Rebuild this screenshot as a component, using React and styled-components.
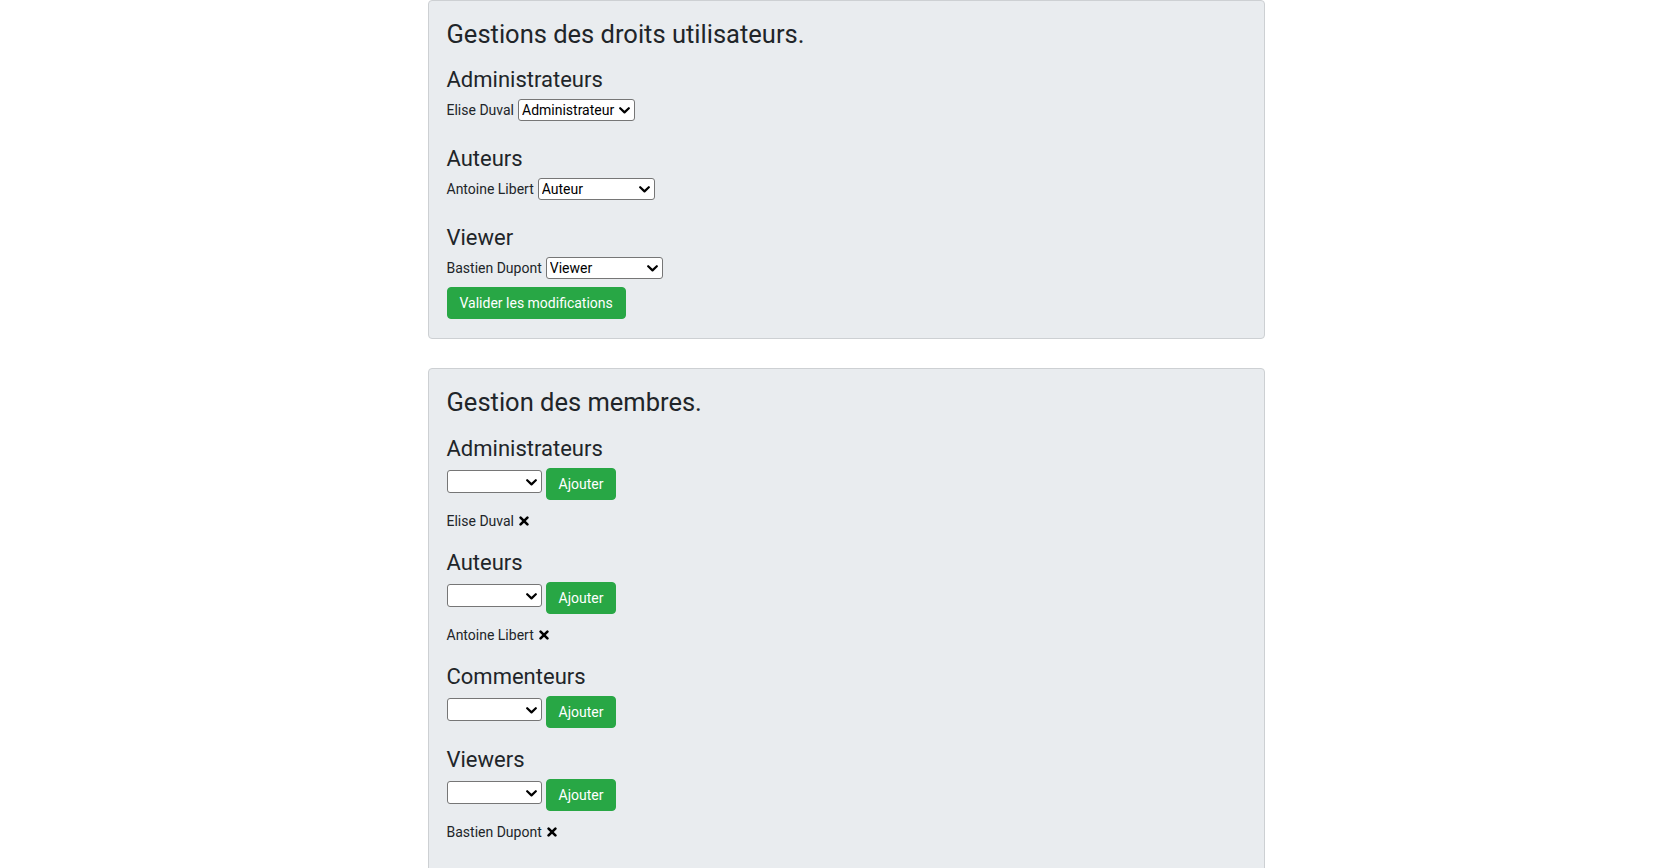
import React from "react";
import styled, { createGlobalStyle } from "styled-components";

const GlobalStyle = createGlobalStyle`
  html, body {
    margin: 0;
    padding: 0;
    background: #ffffff;
    overflow: hidden;
  }
  body {
    font-family: "Segoe UI", Roboto, "Liberation Sans", Arial, sans-serif;
    color: #212529;
    font-size: 14px;
  }
  * {
    box-sizing: border-box;
  }
`;

const Column = styled.main`
  margin-left: calc(25% + 10px);
  width: calc(50% + 2px);
  display: flex;
  flex-direction: column;
  gap: 29px;
`;

const Panel = styled.section`
  background: #e9ecef;
  border: 1px solid #cdd0d3;
  border-radius: 4px;
  padding: 16px 18px ${(p) => p.$bottom || 19}px;
`;

const Title = styled.h3`
  margin: 0 0 ${(p) => p.$after || 15}px;
  font-size: 25.5px;
  line-height: 34px;
  font-weight: 400;
`;

const Groups = styled.div`
  display: flex;
  flex-direction: column;
  gap: ${(p) => p.$gap}px;
`;

const Group = styled.div``;

const GroupTitle = styled.h4`
  margin: 0 0 ${(p) => p.$after}px;
  font-size: 22px;
  line-height: 28px;
  font-weight: 400;
`;

const Row = styled.div`
  display: flex;
  align-items: ${(p) => (p.$top ? "flex-start" : "center")};
  gap: 4px;
  min-height: 24px;
`;

const Name = styled.span`
  font-size: 14px;
  line-height: 24px;
`;

const SelectBox = styled.div`
  position: relative;
  width: ${(p) => p.$width}px;
  height: ${(p) => p.$height}px;
  margin-top: ${(p) => p.$offset || 0}px;
`;

const Select = styled.select`
  appearance: none;
  width: 100%;
  height: 100%;
  margin: 0;
  padding: 0 14px 0 3px;
  border: 1px solid #767676;
  border-radius: 3px;
  background: #ffffff;
  font-family: inherit;
  font-size: 14px;
  color: #000000;
  outline: none;
`;

const Chevron = styled.svg`
  position: absolute;
  right: 5px;
  top: 50%;
  width: 11px;
  height: 7px;
  margin-top: -3px;
  pointer-events: none;
`;

const GreenButton = styled.button`
  height: 32px;
  padding: 0 12px;
  border: 1px solid #28a745;
  border-radius: 4px;
  background: #28a745;
  color: #ffffff;
  font-family: inherit;
  font-size: 14px;
  margin-top: ${(p) => p.$offset || 0}px;
`;

const Member = styled.div`
  display: flex;
  align-items: center;
  gap: 5px;
  margin-top: 11px;
  font-size: 14px;
  line-height: 20px;
`;

const Cross = styled.svg`
  width: 10px;
  height: 10px;
`;

const Remove = () => (
  <Cross viewBox="0 0 10 10">
    <path
      d="M1.6 1.6 L8.4 8.4 M8.4 1.6 L1.6 8.4"
      stroke="#000"
      strokeWidth="2.6"
      strokeLinecap="round"
    />
  </Cross>
);

const RoleSelect = ({ value, width, height, offset, options }) => (
  <SelectBox $width={width} $height={height} $offset={offset}>
    <Select defaultValue={value}>
      {options.map((o) => (
        <option key={o} value={o}>
          {o}
        </option>
      ))}
    </Select>
    <Chevron viewBox="0 0 11 7">
      <polyline
        points="1.2,1.2 5.5,5.4 9.8,1.2"
        fill="none"
        stroke="#000"
        strokeWidth="2.2"
        strokeLinecap="round"
        strokeLinejoin="round"
      />
    </Chevron>
  </SelectBox>
);

const roles = ["Administrateur", "Auteur", "Commentateur", "Viewer"];

const rights = [
  { title: "Administrateurs", name: "Elise Duval", role: "Administrateur" },
  { title: "Auteurs", name: "Antoine Libert", role: "Auteur" },
  { title: "Viewer", name: "Bastien Dupont", role: "Viewer" },
];

const members = [
  { title: "Administrateurs", list: ["Elise Duval"] },
  { title: "Auteurs", list: ["Antoine Libert"] },
  { title: "Commenteurs", list: [] },
  { title: "Viewers", list: ["Bastien Dupont"] },
];

export default function App() {
  return (
    <>
      <GlobalStyle />
      <Column>
        <Panel>
          <Title>Gestions des droits utilisateurs.</Title>
          <Groups $gap={23}>
            {rights.map((r) => (
              <Group key={r.title}>
                <GroupTitle $after={4}>{r.title}</GroupTitle>
                <Row>
                  <Name>{r.name}</Name>
                  <RoleSelect value={r.role} width={117} height={22} options={roles} />
                </Row>
              </Group>
            ))}
          </Groups>
          <GreenButton $offset={7}>Valider les modifications</GreenButton>
        </Panel>

        <Panel $bottom={40}>
          <Title $after={16}>Gestion des membres.</Title>
          <Groups $gap={18}>
            {members.map((m) => (
              <Group key={m.title}>
                <GroupTitle $after={5}>{m.title}</GroupTitle>
                <Row $top>
                  <RoleSelect value="" width={95} height={23} offset={2} options={[""]} />
                  <GreenButton>Ajouter</GreenButton>
                </Row>
                {m.list.map((n) => (
                  <Member key={n}>
                    {n}
                    <Remove />
                  </Member>
                ))}
              </Group>
            ))}
          </Groups>
        </Panel>
      </Column>
    </>
  );
}
